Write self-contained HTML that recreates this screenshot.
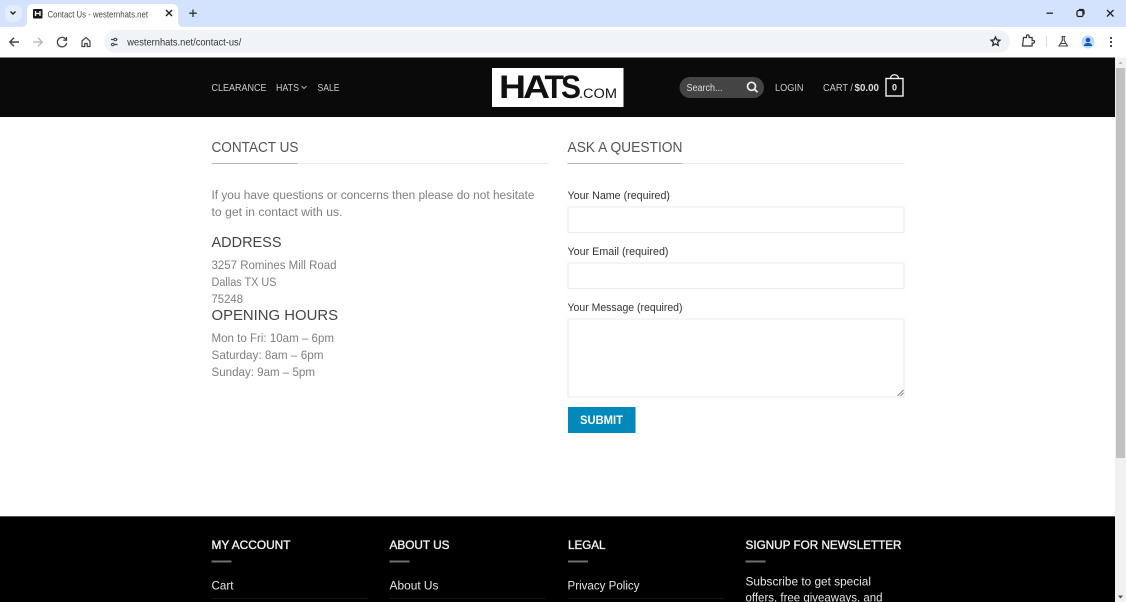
<!DOCTYPE html>
<html><head><meta charset="utf-8"><title>Contact Us - westernhats.net</title>
<style>
html,body{margin:0;padding:0;width:1126px;height:602px;overflow:hidden;background:#fff}
svg{display:block}
text{font-family:"Liberation Sans",sans-serif}
.b{font-weight:bold}
</style></head><body>
<svg width="1126" height="602" viewBox="0 0 1126 602" xmlns="http://www.w3.org/2000/svg">
<rect width="1126" height="602" fill="#fff"/>
<!-- chrome -->
<rect width="1126" height="27" fill="#d3e3fd"/>
<rect x="5" y="5" width="17" height="17" rx="7" fill="#e4edfc"/>
<path d="M10.500 11.500l2.500 2.500 2.500-2.500" fill="none" stroke="#1f1f1f" stroke-width="1.400"/>
<path d="M21 27c4 0 6-2 6-6V10c0-4 2-6 6-6h139c4 0 6 2 6 6v11c0 4 2 6 6 6z" fill="#fff"/>
<rect x="33" y="9" width="9.500" height="9.500" rx="1" fill="#1a1a1a"/>
<path d="M35.500 11v5M40 11v5M35.500 13.500H40" stroke="#fff" stroke-width="1.300" fill="none"/>
<text x="47.500" y="17.500" font-size="9.500" fill="#474747" textLength="100.500" lengthAdjust="spacingAndGlyphs">Contact Us - westernhats.net</text>
<path d="M166 10l6 6M172 10l-6 6" stroke="#222" stroke-width="1.400"/>
<path d="M193 9.500v7.500M189.200 13.200h7.600" stroke="#333" stroke-width="1.300"/>
<path d="M1046.500 13.200h6.500" stroke="#222" stroke-width="1.300"/>
<rect x="1077" y="10.500" width="6" height="6" rx="1.500" fill="none" stroke="#222" stroke-width="1.300"/>
<path d="M1079 9.500h3.500a1.500 1.500 0 0 1 1.500 1.500v3.500" fill="none" stroke="#222" stroke-width="1.200"/>
<path d="M1107 10l6.500 6.500M1113.500 10l-6.500 6.500" stroke="#222" stroke-width="1.300"/>
<rect y="27" width="1126" height="30" fill="#fff"/>
<rect x="104" y="30" width="906" height="23" rx="11.500" fill="#f0f4f9"/>
<path d="M19 42h-9M14 37.800L9.800 42l4.200 4.200" fill="none" stroke="#444" stroke-width="1.400"/>
<path d="M33 42h9M38 37.800l4.200 4.200-4.200 4.200" fill="none" stroke="#b5b5b5" stroke-width="1.300"/>
<path d="M65.800 39.200a4.700 4.700 0 1 0 .9 3.800M66.500 37v3.200h-3.200" fill="none" stroke="#444" stroke-width="1.300"/>
<path d="M82 41l4-3.500 4 3.500v5.500h-2.800v-3h-2.400v3H82z" fill="none" stroke="#444" stroke-width="1.200"/>
<path d="M111 39.500h3.500M116.500 39.500h1M111 44.500h1M114 44.500h3.500" stroke="#444" stroke-width="1.300"/>
<circle cx="115.300" cy="39.500" r="1.300" fill="none" stroke="#444"/><circle cx="112.800" cy="44.500" r="1.300" fill="none" stroke="#444"/>
<text x="127.300" y="45.500" font-size="10.300" fill="#333" textLength="114" lengthAdjust="spacingAndGlyphs">westernhats.net/contact-us/</text>
<path d="M995.500 37l1.300 2.900 3.200.3-2.400 2.100.7 3.100-2.800-1.600-2.800 1.600.7-3.100-2.400-2.100 3.200-.3z" fill="none" stroke="#222" stroke-width="1.200"/>
<path d="M1024 38h3v-1.300a1.300 1.300 0 0 1 2.600 0V38h3v3h1.200a1.300 1.300 0 0 1 0 2.600h-1.200V46.500h-9.600z" fill="none" stroke="#333" stroke-width="1.200" transform="translate(-.5 -.5)"/>
<rect x="1046" y="36" width="1" height="11" fill="#dcdcdc"/>
<path d="M1061.500 36.500h4M1062.300 37v3.500l-3.300 5.500h8.500l-3.300-5.500V37M1060.500 43.500h5.500" fill="none" stroke="#444" stroke-width="1.100"/>
<circle cx="1088" cy="42" r="6.500" fill="#c2d9f7"/>
<circle cx="1088" cy="40" r="2.300" fill="#0b57d0"/><path d="M1083.800 46c.6-2.400 2-3 4.200-3s3.600.6 4.200 3z" fill="#0b57d0"/>
<circle cx="1111" cy="38" r="1.100" fill="#333"/><circle cx="1111" cy="42" r="1.100" fill="#333"/><circle cx="1111" cy="46" r="1.100" fill="#333"/>
<!-- header -->
<rect y="57.500" width="1115" height="59.500" fill="#0a0a0a"/>
<g font-size="9.800" fill="#c9c9c9">
<text x="211.500" y="91" textLength="55" lengthAdjust="spacingAndGlyphs">CLEARANCE</text>
<text x="276" y="91" textLength="23" lengthAdjust="spacingAndGlyphs">HATS</text>
<text x="317.500" y="91" textLength="22" lengthAdjust="spacingAndGlyphs">SALE</text>
<text x="775" y="91" textLength="28.500" lengthAdjust="spacingAndGlyphs">LOGIN</text>
<text x="823" y="91" textLength="30" lengthAdjust="spacingAndGlyphs">CART /</text>
</g>
<path d="M301.500 86l2.500 2.500 2.500-2.500" fill="none" stroke="#aaa" stroke-width="1"/>
<rect x="492" y="68" width="131.500" height="39" fill="#fff"/>
<g font-size="32.500" fill="#111" class="b">
<text x="499" y="98" textLength="27" lengthAdjust="spacingAndGlyphs">H</text>
<text x="523" y="98" textLength="27" lengthAdjust="spacingAndGlyphs">A</text>
<text x="544.500" y="98" textLength="19.500" lengthAdjust="spacingAndGlyphs">T</text>
<text x="561" y="98" textLength="20" lengthAdjust="spacingAndGlyphs">S</text>
</g>
<text x="579" y="98" font-size="13.500" fill="#111" textLength="38" lengthAdjust="spacingAndGlyphs">.COM</text>
<rect x="679.500" y="77" width="84.500" height="21" rx="10.500" fill="#444"/>
<text x="686.500" y="91" font-size="9.800" fill="#ddd" textLength="36" lengthAdjust="spacingAndGlyphs">Search...</text>
<circle cx="751.500" cy="86.300" r="4" fill="none" stroke="#eee" stroke-width="1.700"/>
<path d="M754.500 89.300l3 3" stroke="#eee" stroke-width="1.800"/>
<text x="854.500" y="91" class="b" font-size="9.800" fill="#ddd" textLength="24.500" lengthAdjust="spacingAndGlyphs">$0.00</text>
<rect x="886" y="78.500" width="17" height="17.500" fill="none" stroke="#f2f2f2" stroke-width="1.400"/>
<path d="M890.500 78.500c0-5 8-5 8 0" fill="none" stroke="#f2f2f2" stroke-width="1.200"/>
<text x="894.500" y="90.500" class="b" font-size="9" fill="#eee" text-anchor="middle">0</text>
<!-- scrollbar -->
<rect x="1115" y="57.500" width="11" height="544.500" fill="#f1f1f1"/>
<rect x="1116" y="68" width="9" height="390" fill="#c1c1c1"/>
<path d="M1118.500 64l2-2.500 2 2.500z" fill="#b5b5b5"/>
<path d="M1118 595.500h5l-2.500 3z" fill="#505050"/>
<!-- headings -->
<text x="211.500" y="152" font-size="14.500" fill="#555" textLength="87" lengthAdjust="spacingAndGlyphs">CONTACT US</text>
<text x="567.500" y="152" font-size="14.500" fill="#555" textLength="115" lengthAdjust="spacingAndGlyphs">ASK A QUESTION</text>
<rect x="211.500" y="163" width="337" height="1" fill="#ececec"/>
<rect x="211.500" y="163" width="86.500" height="1" fill="#b9b9b9"/>
<rect x="567.500" y="163" width="337" height="1" fill="#ececec"/>
<rect x="567.500" y="163" width="115" height="1" fill="#b9b9b9"/>
<!-- left column -->
<g font-size="12.300" fill="#7f7f7f">
<text x="211.500" y="199" textLength="323" lengthAdjust="spacingAndGlyphs">If you have questions or concerns then please do not hesitate</text>
<text x="211.500" y="216" textLength="131" lengthAdjust="spacingAndGlyphs">to get in contact with us.</text>
<text x="211.500" y="269" textLength="125" lengthAdjust="spacingAndGlyphs">3257 Romines Mill Road</text>
<text x="211.500" y="286" textLength="65" lengthAdjust="spacingAndGlyphs">Dallas TX US</text>
<text x="211.500" y="303" textLength="31.500" lengthAdjust="spacingAndGlyphs">75248</text>
<text x="211.500" y="342" textLength="122.500" lengthAdjust="spacingAndGlyphs">Mon to Fri: 10am – 6pm</text>
<text x="211.500" y="359" textLength="112" lengthAdjust="spacingAndGlyphs">Saturday: 8am – 6pm</text>
<text x="211.500" y="376" textLength="103.500" lengthAdjust="spacingAndGlyphs">Sunday: 9am – 5pm</text>
</g>
<g font-size="14.500" fill="#444">
<text x="211.500" y="247" textLength="70" lengthAdjust="spacingAndGlyphs">ADDRESS</text>
<text x="211.500" y="320" textLength="126.500" lengthAdjust="spacingAndGlyphs">OPENING HOURS</text>
</g>
<!-- form -->
<g font-size="11.300" fill="#333">
<text x="567.500" y="199" textLength="102.500" lengthAdjust="spacingAndGlyphs">Your Name (required)</text>
<text x="567.500" y="255" textLength="101" lengthAdjust="spacingAndGlyphs">Your Email (required)</text>
<text x="567.500" y="311" textLength="115" lengthAdjust="spacingAndGlyphs">Your Message (required)</text>
</g>
<g fill="#fff" stroke="#ebebeb">
<rect x="568" y="207" width="336" height="25.500"/>
<rect x="568" y="263" width="336" height="25.500"/>
<rect x="568" y="319" width="336" height="78"/>
</g>
<path d="M897.500 396l6-6M900.500 396l3-3" stroke="#666" stroke-width=".8"/>
<rect x="568" y="407" width="67.500" height="26" fill="#0089ba"/>
<text x="580" y="424" class="b" font-size="11.500" fill="#fff" textLength="43" lengthAdjust="spacingAndGlyphs">SUBMIT</text>
<!-- footer -->
<rect y="516" width="1115" height="86" fill="#000"/>
<rect y="516" width="1115" height="1" fill="#555"/>
<g font-size="11.800" fill="#f2f2f2" stroke="#f2f2f2" stroke-width=".35">
<text x="211.500" y="549" textLength="79" lengthAdjust="spacingAndGlyphs">MY ACCOUNT</text>
<text x="389.500" y="549" textLength="60" lengthAdjust="spacingAndGlyphs">ABOUT US</text>
<text x="568" y="549" textLength="37.500" lengthAdjust="spacingAndGlyphs">LEGAL</text>
<text x="745.500" y="549" textLength="156" lengthAdjust="spacingAndGlyphs">SIGNUP FOR NEWSLETTER</text>
</g>
<g fill="#6f6f6f">
<rect x="211.500" y="560.500" width="20" height="2"/>
<rect x="389.500" y="560.500" width="20" height="2"/>
<rect x="568" y="560.500" width="20" height="2"/>
<rect x="745.500" y="560.500" width="20" height="2"/>
</g>
<g font-size="12.300" fill="#e6e6e6">
<text x="211.500" y="589.500" textLength="22" lengthAdjust="spacingAndGlyphs">Cart</text>
<text x="389.500" y="589.500" textLength="49" lengthAdjust="spacingAndGlyphs">About Us</text>
<text x="567.500" y="589.500" textLength="72" lengthAdjust="spacingAndGlyphs">Privacy Policy</text>
<text x="745.500" y="585.500" textLength="125.500" lengthAdjust="spacingAndGlyphs">Subscribe to get special</text>
<text x="745.500" y="601.500" textLength="137" lengthAdjust="spacingAndGlyphs">offers, free giveaways, and</text>
</g>
<g fill="#141414">
<rect x="211.500" y="598" width="156" height="1"/>
<rect x="389.500" y="598" width="156" height="1"/>
<rect x="567.500" y="598" width="156" height="1"/>
</g>
</svg>
</body></html>
